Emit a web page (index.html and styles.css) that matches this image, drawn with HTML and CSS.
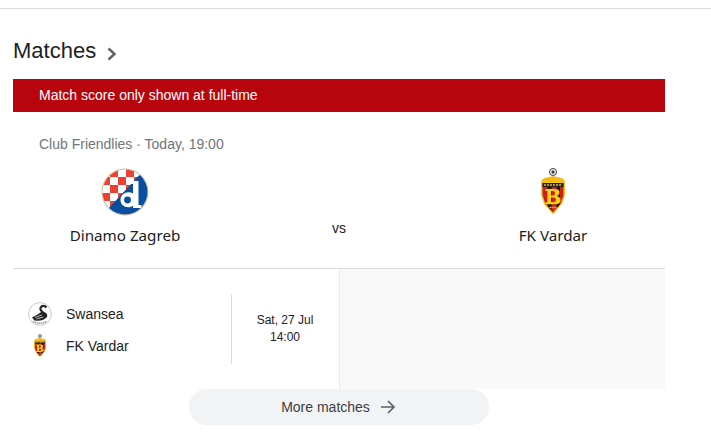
FILE: index.html
```html
<!DOCTYPE html>
<html lang="en">
<head>
<meta charset="utf-8">
<title>Matches</title>
<link rel="stylesheet" href="styles.css">
</head>
<body>
<svg class="defs" width="0" height="0">
  <symbol id="vardar" viewBox="0 0 48 48">
    <circle cx="24" cy="4" r="3.600" fill="#ddd" stroke="#555" stroke-width="1"/>
    <circle cx="24" cy="4" r="1.500" fill="#333"/>
    <path d="M12 16Q11.500 10 18 9.500L24 8 30 9.500Q36.500 10 36 16Z" fill="#f3b81c"/>
    <path d="M12 14H36V27L33 36 24 46.500 15 36 12 27Z" fill="#f4c91f"/>
    <clipPath id="vs"><path d="M13.500 15H34.500V27L32 35 24 44.500 16 35 13.500 27Z"/></clipPath>
    <g clip-path="url(#vs)">
      <rect x="13" y="15" width="22" height="30" fill="#cf1f1f"/>
      <rect x="18.500" y="15" width="4" height="30" fill="#1c1512"/>
      <rect x="27.500" y="15" width="3.500" height="30" fill="#1c1512"/>
      <rect x="13" y="15" width="22" height="4" fill="#2a2014"/>
      <path d="M15 17h18" stroke="#d9b45a" stroke-width="1.300" stroke-dasharray="2 1"/>
    </g>
    <path d="M19 21h9.500q4.500 0 4.500 3.500 0 2.800-3 3.600 4 .8 4 4.100 0 4-5 4H19v-2h1.800V23H19zM24.500 23v4.500h2q2 0 2-2.300 0-2.200-2-2.200zM24.500 29.500V34h2.500q2.500 0 2.500-2.300 0-2.200-2.500-2.200z" fill="#f8d218" fill-rule="evenodd" transform="translate(-2.500 0)"/>
    <path d="M20.500 39.500h7" stroke="#e8c040" stroke-width="1.300" stroke-dasharray="1.400 .5"/>
  </symbol>
</svg>
<main class="page">
  <h2 class="title">Matches
    <svg class="chev" width="10" height="14" viewBox="0 0 10 14"><path d="M1.500 1.500 7.500 7 1.500 12.500" fill="none" stroke="#5f6368" stroke-width="2.400"/></svg>
  </h2>
  <div class="banner">Match score only shown at full-time</div>
  <div class="meta">Club Friendlies · Today, 19:00</div>
  <section class="fixture">
    <div class="team">
      <svg class="crest-lg" viewBox="0 0 48 48">
        <defs>
          <clipPath id="dz"><circle cx="24" cy="24" r="22.500"/></clipPath>
        </defs>
        <circle cx="24" cy="24" r="23.500" fill="#cbbd97"/>
        <g clip-path="url(#dz)">
          <rect width="48" height="48" fill="#fff"/>
          <g fill="#ef4034">
            <rect x="9" y="1" width="8" height="8"/><rect x="25" y="1" width="8" height="8"/>
            <rect x="1" y="9" width="8" height="8"/><rect x="17" y="9" width="8" height="8"/><rect x="33" y="9" width="8" height="8"/>
            <rect x="9" y="17" width="8" height="8"/><rect x="25" y="17" width="8" height="8"/>
            <rect x="1" y="25" width="8" height="8"/><rect x="17" y="25" width="8" height="8"/>
            <rect x="9" y="33" width="8" height="8"/>
          </g>
          <path d="M43 2 7 41 12 48H48V2z" fill="#0a4f9e"/>
          <path d="M30 15h8V39h3v3H32.500V39.700c-5.500 3.500-12.500 .5-12.500-5.700 0-6.500 7-9.500 12.500-6.500V18H30z" fill="#fff" transform="translate(-.5 -2)"/>
          <circle cx="26.500" cy="32" r="3.400" fill="#0a4f9e"/>
        </g>
      </svg>
      <span class="team-name">Dinamo Zagreb</span>
    </div>
    <div class="vs">vs</div>
    <div class="team">
      <svg class="crest-lg"><use href="#vardar"/></svg>
      <span class="team-name">FK Vardar</span>
    </div>
  </section>
  <section class="lower">
    <div class="card">
      <div class="sides">
        <div class="side">
          <svg class="crest-sm" viewBox="0 0 24 24">
            <circle cx="12" cy="12" r="11.400" fill="#fff" stroke="#c9c9c9" stroke-width="1"/>
            <path d="M18.500 5.500Q16 2.800 13.500 4.500 11 7 14 9.500 17 12 15 14" fill="none" stroke="#222" stroke-width="2.200"/>
            <path d="M4 15.500Q10 12.500 14 9.500 20.500 10.500 19 15 14 20 6.500 18.500Z" fill="#222"/>
            <path d="M7 15.500 14 13M8.500 17 15.500 15" stroke="#fff" stroke-width=".7"/>
            <path d="M5 19.500q7 3.500 14 0" fill="none" stroke="#888" stroke-width="1.200" stroke-dasharray="1.500 .5"/>
          </svg>
          <span>Swansea</span>
        </div>
        <div class="side">
          <svg class="crest-sm"><use href="#vardar"/></svg>
          <span>FK Vardar</span>
        </div>
      </div>
      <div class="when">
        <span>Sat, 27 Jul</span>
        <span>14:00</span>
      </div>
    </div>
    <div class="blank"></div>
  </section>
  <div class="more-row">
    <a class="more">More matches
      <svg width="16" height="16" viewBox="0 0 16 16"><path d="M0 8H13M7 2l6 6-6 6" fill="none" stroke="#5f6368" stroke-width="1.700"/></svg>
    </a>
  </div>
</main>
</body>
</html>
```

FILE: styles.css
```css
* { box-sizing: border-box; }
html, body { margin: 0; padding: 0; background: #fff; }
body { font-family: "Liberation Sans", Arial, sans-serif; color: #202124; height: 444px; overflow: hidden; }
.defs { display: block; }
.page { margin-top: 8px; border-top: 1px solid #dadce0; padding-left: 13px; width: 711px; }
.title { margin: 0; padding-top: 28px; height: 70px; font-size: 22px; line-height: 27px; font-weight: 400; display: flex; align-items: flex-start; }
.chev { margin: 10px 0 0 11px; }
.banner { width: 652px; height: 33px; background: #b8050d; color: #fff; font-size: 14px; line-height: 33px; padding-left: 26px; }
.meta { width: 652px; padding: 24px 0 0 26px; font-size: 14px; line-height: 16px; color: #70757a; }
.fixture { width: 652px; height: 117px; display: grid; grid-template-columns: 224px 204px 224px; border-bottom: 1px solid #dadce0; }
.team { display: flex; flex-direction: column; align-items: center; padding-top: 16px; }
.crest-lg { width: 48px; height: 48px; display: block; }
.team-name { font-family: "Noto Sans", "Liberation Sans", sans-serif; font-size: 15.2px; line-height: 20px; margin-top: 9px; color: #202124; }
.vs { text-align: center; font-size: 14px; line-height: 16px; padding-top: 68px; }
.lower { width: 652px; height: 120px; display: flex; }
.card { width: 327px; border-right: 1px solid #e8eaed; display: flex; align-items: flex-start; padding: 25px 0 0 15px; }
.sides { width: 204px; height: 70px; border-right: 1px solid #dadce0; display: flex; flex-direction: column; padding-top: 8px; gap: 8px; }
.side { display: flex; align-items: center; gap: 14px; height: 24px; font-size: 14px; }
.crest-sm { width: 24px; height: 24px; flex: none; }
.when { flex: 1; display: flex; flex-direction: column; align-items: center; font-size: 12px; line-height: 17px; padding: 18px 1px 0 0; }
.blank { flex: 1; background: #f9f9f9; }
.more-row { width: 652px; display: flex; justify-content: center; }
.more { width: 300px; height: 36px; border-radius: 18px; background: #f1f3f4; display: flex; align-items: center; justify-content: center; gap: 11px; font-size: 14px; color: #3c4043; }
```
